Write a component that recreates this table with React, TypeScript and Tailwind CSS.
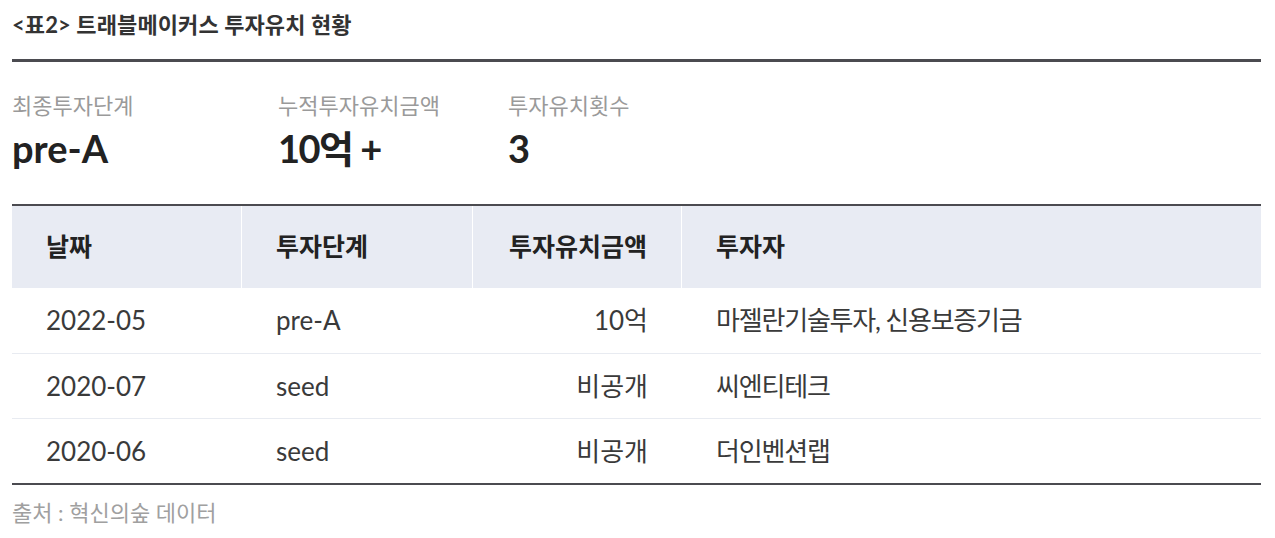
import React from "react";

const rows = [
  { date: "2022-05", stage: "pre-A", amount: "10억", investor: "마젤란기술투자, 신용보증기금" },
  { date: "2020-07", stage: "seed", amount: "비공개", investor: "씨엔티테크" },
  { date: "2020-06", stage: "seed", amount: "비공개", investor: "더인벤션랩" },
];

const font = { fontFamily: 'Lato, "Noto Sans CJK KR", sans-serif' };

export default function App() {
  return (
    <div className="bg-white w-[1275px] h-[538px] px-[12px] pt-[11px]" style={font}>
      {/* Title */}
      <h2 className="text-[22px] font-bold text-[#333] leading-[28px] tracking-[0.1px]">
        &lt;표2&gt; 트래블메이커스 투자유치 현황
      </h2>
      <div className="w-[1249px] h-[3px] bg-[#4b4b50] mt-[20px]" />

      {/* Summary */}
      <div className="flex mt-[30px]">
        <div className="w-[266px]">
          <div className="text-[22px] text-[#9a9a9a] leading-[28px]">최종투자단계</div>
          <div className="text-[38px] font-bold text-[#222] leading-[48px] mt-[4px]">pre-A</div>
        </div>
        <div className="w-[230px]">
          <div className="text-[22px] text-[#9a9a9a] leading-[28px]">누적투자유치금액</div>
          <div className="text-[38px] font-bold text-[#222] leading-[48px] mt-[4px] tracking-[-1.5px]">10억 +</div>
        </div>
        <div>
          <div className="text-[22px] text-[#9a9a9a] leading-[28px]">투자유치횟수</div>
          <div className="text-[38px] font-bold text-[#222] leading-[48px] mt-[4px]">3</div>
        </div>
      </div>

      {/* Table */}
      <div className="w-[1249px] mt-[32px] border-t-2 border-b-2 border-[#4b4b50]">
        <div className="flex h-[82px] bg-[#e8ebf3] text-[25px] font-bold text-[#222]">
          <div className="w-[230px] flex items-center pl-[34px] border-r border-white">날짜</div>
          <div className="w-[231px] flex items-center pl-[34px] border-r border-white">투자단계</div>
          <div className="w-[209px] flex items-center justify-end pr-[34px] border-r border-white">투자유치금액</div>
          <div className="flex-1 flex items-center pl-[34px]">투자자</div>
        </div>
        {rows.map((r, i) => (
          <div
            key={i}
            className={`flex h-[65px] text-[26px] text-[#3a3a3a] ${i > 0 ? "border-t border-[#e8ebf1]" : ""}`}
          >
            <div className="w-[230px] flex items-center pl-[34px]">{r.date}</div>
            <div className="w-[231px] flex items-center pl-[34px]">{r.stage}</div>
            <div className="w-[209px] flex items-center justify-end pr-[34px]">{r.amount}</div>
            <div className="flex-1 flex items-center pl-[34px] tracking-[-1.2px]">{r.investor}</div>
          </div>
        ))}
      </div>

      <div className="text-[22px] text-[#a0a0a0] mt-[13px] leading-[30px]">출처 : 혁신의숲 데이터</div>
    </div>
  );
}
